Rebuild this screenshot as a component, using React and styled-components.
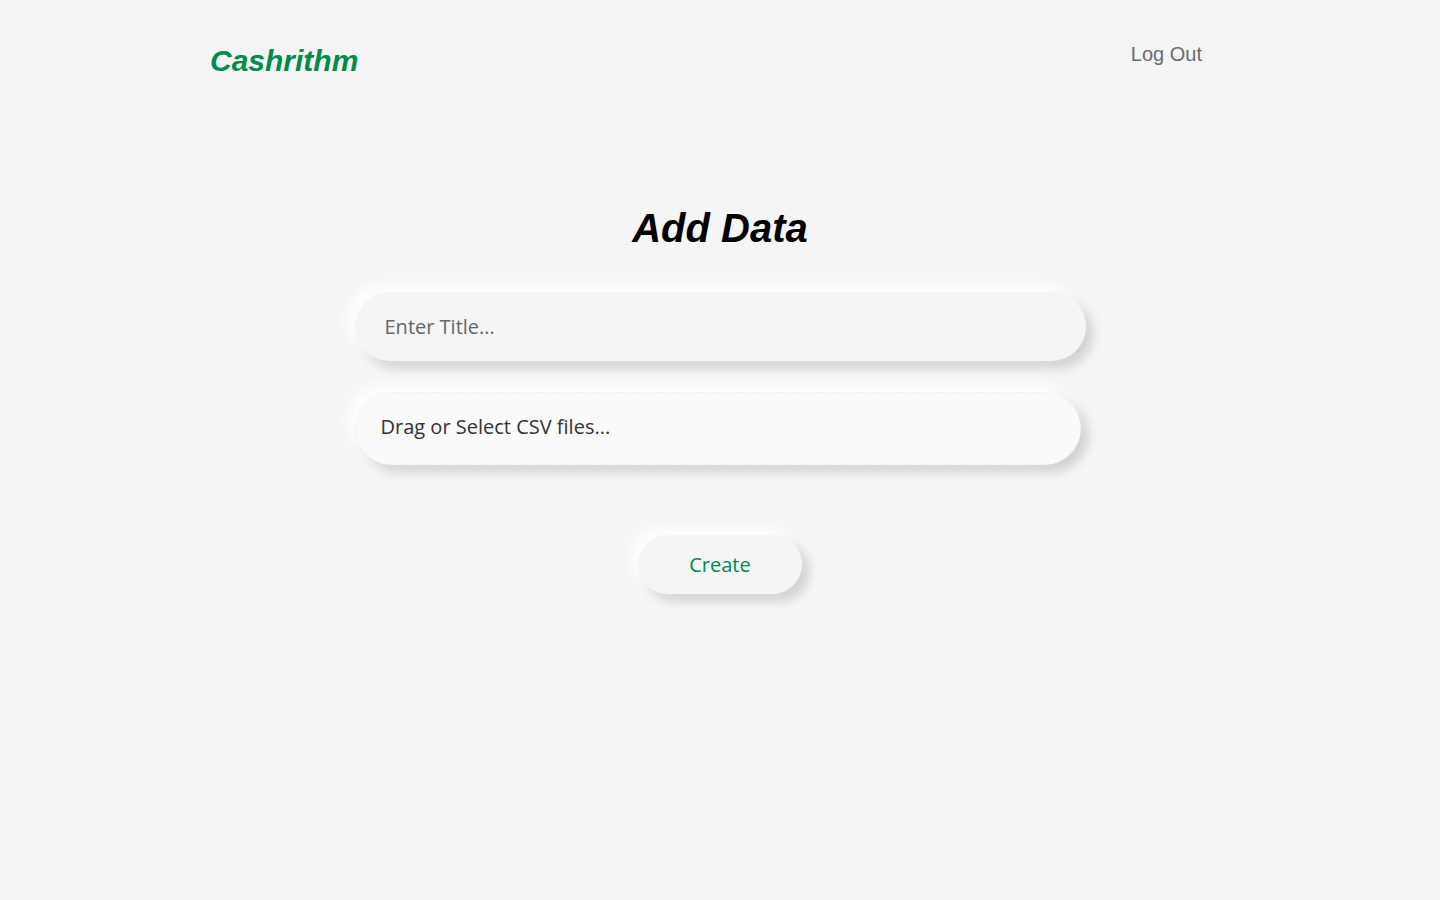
import React from 'react'
import styled, { createGlobalStyle } from 'styled-components'

const GlobalStyle = createGlobalStyle`
  html, body {
    margin: 0;
    padding: 0;
    background: #f5f5f5;
  }
  body {
    font-family: "Open Sans", sans-serif;
  }
`

const Page = styled.div`
  min-height: 100vh;
  background: #f5f5f5;
`

const Header = styled.header`
  display: flex;
  justify-content: space-between;
  align-items: flex-start;
  width: 1020px;
  margin: 0 auto;
  padding-top: 42px;
  box-sizing: border-box;
  padding-right: 28px;
`

const Logo = styled.a`
  font-family: "Liberation Sans", Arial, sans-serif;
  font-weight: bold;
  font-style: italic;
  font-size: 30px;
  line-height: 38px;
  color: #008a4b;
  text-decoration: none;
`

const LogOut = styled.button`
  font-family: "Liberation Sans", Arial, sans-serif;
  font-size: 20px;
  line-height: 24px;
  color: #6b6b6b;
  background: none;
  border: none;
  padding: 0;
  cursor: pointer;
`

const Main = styled.main`
  display: flex;
  flex-direction: column;
  align-items: center;
  padding-top: 124px;
`

const Title = styled.h1`
  margin: 0;
  font-family: "Liberation Sans", Arial, sans-serif;
  font-weight: bold;
  font-style: italic;
  font-size: 40px;
  line-height: 48px;
  color: #000;
`

const Form = styled.form`
  display: flex;
  flex-direction: column;
  align-items: flex-start;
  width: 731px;
  margin-top: 40px;
`

const shadow = `
  box-shadow: -8px -8px 16px rgba(255, 255, 255, 0.9),
    7px 7px 11px rgba(0, 0, 0, 0.15);
`

const TitleInput = styled.input`
  width: 731px;
  height: 69px;
  box-sizing: border-box;
  border: none;
  outline: none;
  border-radius: 35px;
  background: #f5f5f5;
  padding: 0 30px;
  font-family: "Open Sans", sans-serif;
  font-size: 20px;
  color: #333;
  ${shadow}

  &::placeholder {
    color: #666;
  }
`

const DropZone = styled.label`
  display: flex;
  align-items: center;
  width: 726px;
  height: 73px;
  margin-top: 31px;
  box-sizing: border-box;
  border: 1px dashed #f1f1f1;
  border-radius: 37px;
  background: #fafafa;
  padding: 0 25px 5px;
  font-family: "Open Sans", sans-serif;
  font-size: 20px;
  color: #333;
  cursor: pointer;
  ${shadow}

  input {
    display: none;
  }
`

const CreateButton = styled.button`
  align-self: center;
  width: 164px;
  height: 59px;
  margin-top: 70px;
  border: none;
  border-radius: 30px;
  background: #f5f5f5;
  font-family: "Open Sans", sans-serif;
  font-size: 20px;
  color: #008a4b;
  cursor: pointer;
  ${shadow}
`

export default function App() {
  return (
    <Page>
      <GlobalStyle />
      <Header>
        <Logo href="#">Cashrithm</Logo>
        <LogOut>Log Out</LogOut>
      </Header>
      <Main>
        <Title>Add Data</Title>
        <Form onSubmit={e => e.preventDefault()}>
          <TitleInput placeholder="Enter Title..." />
          <DropZone>
            Drag or Select CSV files...
            <input type="file" accept=".csv" multiple />
          </DropZone>
          <CreateButton type="submit">Create</CreateButton>
        </Form>
      </Main>
    </Page>
  )
}
